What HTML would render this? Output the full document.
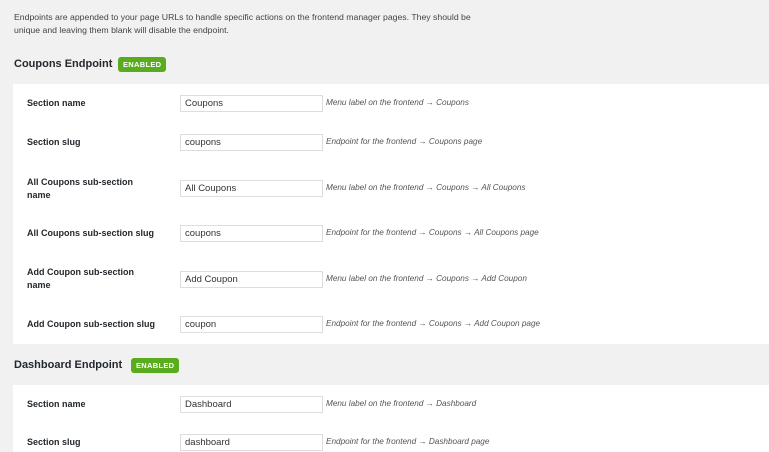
<!DOCTYPE html>
<html><head><style>
body{margin:0;width:769px;height:452px;background:#f1f1f1;font-family:"Liberation Sans",sans-serif;color:#23282d;position:relative;overflow:hidden}
.a{position:absolute;white-space:nowrap}
.p{position:absolute;left:13px;width:756px;background:#fff}
.intro{left:14px;top:11px;font-size:8.7px;line-height:12.5px;color:#444}
.h{left:14px;font-size:11px;font-weight:bold;color:#23282d}
.b{background:#5aab1e;color:#fff;font-size:7.5px;font-weight:bold;border-radius:3px;padding:3px 5px;letter-spacing:.3px}
.l{left:27px;font-size:9px;font-weight:bold;line-height:13px}
.i{left:180px;height:15px;border:1px solid #ddd;background:#fff;font-size:9.5px;line-height:15px;padding-left:4px;box-sizing:content-box;width:137px;color:#333}
.d{left:326px;font-size:8.2px;font-style:italic;color:#555}
</style></head><body>
<div class="a intro">Endpoints are appended to your page URLs to handle specific actions on the frontend manager pages. They should be<br>unique and leaving them blank will disable the endpoint.</div>
<div class="a h" style="top:58px">Coupons Endpoint</div>
<div class="a b" style="left:118px;top:57px">ENABLED</div>
<div class="p" style="top:84px;height:260px"></div>
<div class="a l" style="top:97px">Section name</div>
<div class="a i" style="top:95px">Coupons</div>
<div class="a d" style="top:98px">Menu label on the frontend → Coupons</div>
<div class="a l" style="top:136px">Section slug</div>
<div class="a i" style="top:134px">coupons</div>
<div class="a d" style="top:137px">Endpoint for the frontend → Coupons page</div>
<div class="a l" style="top:176px">All Coupons sub-section<br>name</div>
<div class="a i" style="top:180px">All Coupons</div>
<div class="a d" style="top:183px">Menu label on the frontend → Coupons → All Coupons</div>
<div class="a l" style="top:227px">All Coupons sub-section slug</div>
<div class="a i" style="top:225px">coupons</div>
<div class="a d" style="top:228px">Endpoint for the frontend → Coupons → All Coupons page</div>
<div class="a l" style="top:266px">Add Coupon sub-section<br>name</div>
<div class="a i" style="top:271px">Add Coupon</div>
<div class="a d" style="top:274px">Menu label on the frontend → Coupons → Add Coupon</div>
<div class="a l" style="top:318px">Add Coupon sub-section slug</div>
<div class="a i" style="top:316px">coupon</div>
<div class="a d" style="top:319px">Endpoint for the frontend → Coupons → Add Coupon page</div>
<div class="a h" style="top:359px">Dashboard Endpoint</div>
<div class="a b" style="left:131px;top:358px">ENABLED</div>
<div class="p" style="top:385px;height:67px"></div>
<div class="a l" style="top:398px">Section name</div>
<div class="a i" style="top:396px">Dashboard</div>
<div class="a d" style="top:399px">Menu label on the frontend → Dashboard</div>
<div class="a l" style="top:436px">Section slug</div>
<div class="a i" style="top:434px">dashboard</div>
<div class="a d" style="top:437px">Endpoint for the frontend → Dashboard page</div>
</body></html>
